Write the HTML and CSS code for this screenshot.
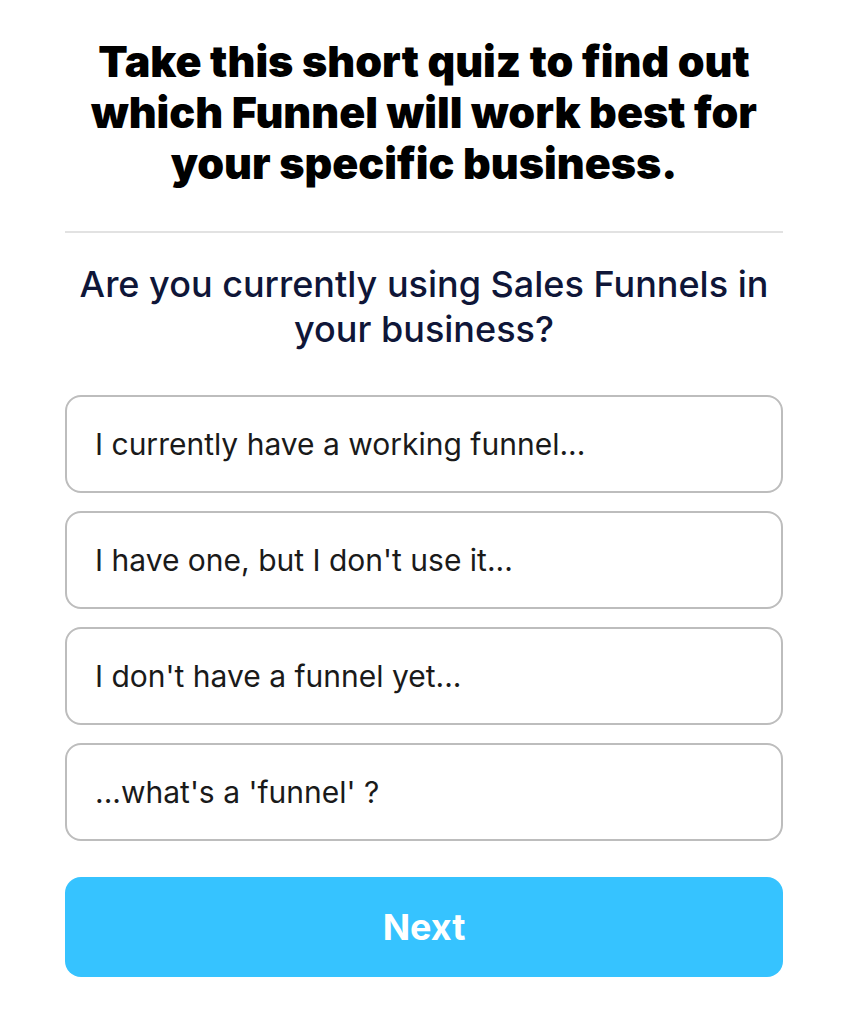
FILE: index.html
```html
<!DOCTYPE html>
<html>
	<head>
		<meta charset="utf-8" />
		<title>Funnel Quiz</title>
		<link rel="stylesheet" href="styles.css">
	</head>
	<body>
		<div class="quiz">
			<h1 class="quiz-title">Take this short quiz to find out which Funnel will work best for your specific business.</h1>
			<hr class="divider">
			<h2 class="question">Are you currently using Sales Funnels in your business?</h2>
			<div class="options">
				<div class="option">I currently have a working funnel...</div>
				<div class="option">I have one, but I don't use it...</div>
				<div class="option">I don't have a funnel yet...</div>
				<div class="option">...what's a 'funnel' ?</div>
			</div>
			<button class="next">Next</button>
		</div>
	</body>
</html>
```

FILE: styles.css
```css
body {
	margin: 0;
	font-family: Inter, "Noto Sans", sans-serif;
	background: #fff;
}
.quiz {
	width: 718px;
	margin: 0 auto;
	padding: 36px 0 0 2px;
}
.quiz-title {
	margin: 0;
	font-size: 43px;
	font-weight: 900;
	line-height: 51px;
	text-align: center;
	color: #000;
}
.divider {
	margin: 42px 0 0;
	border: 0;
	height: 2px;
	background: #e2e2e2;
}
.question {
	margin: 29px 0 0;
	font-size: 36px;
	font-weight: 500;
	line-height: 45px;
	text-align: center;
	color: #0f1638;
}
.options {
	display: flex;
	flex-direction: column;
	gap: 18px;
	margin-top: 43px;
}
.option {
	height: 98px;
	box-sizing: border-box;
	display: flex;
	align-items: center;
	padding: 0 28px;
	border: 2px solid #bdbdbd;
	border-radius: 16px;
	font-size: 30px;
	color: #1a1a1a;
}
.next {
	display: block;
	width: 100%;
	height: 100px;
	margin-top: 36px;
	border: 0;
	border-radius: 16px;
	background: #36c3ff;
	color: #fff;
	font-family: Inter, "Noto Sans", sans-serif;
	font-size: 36px;
	font-weight: 700;
}
```
